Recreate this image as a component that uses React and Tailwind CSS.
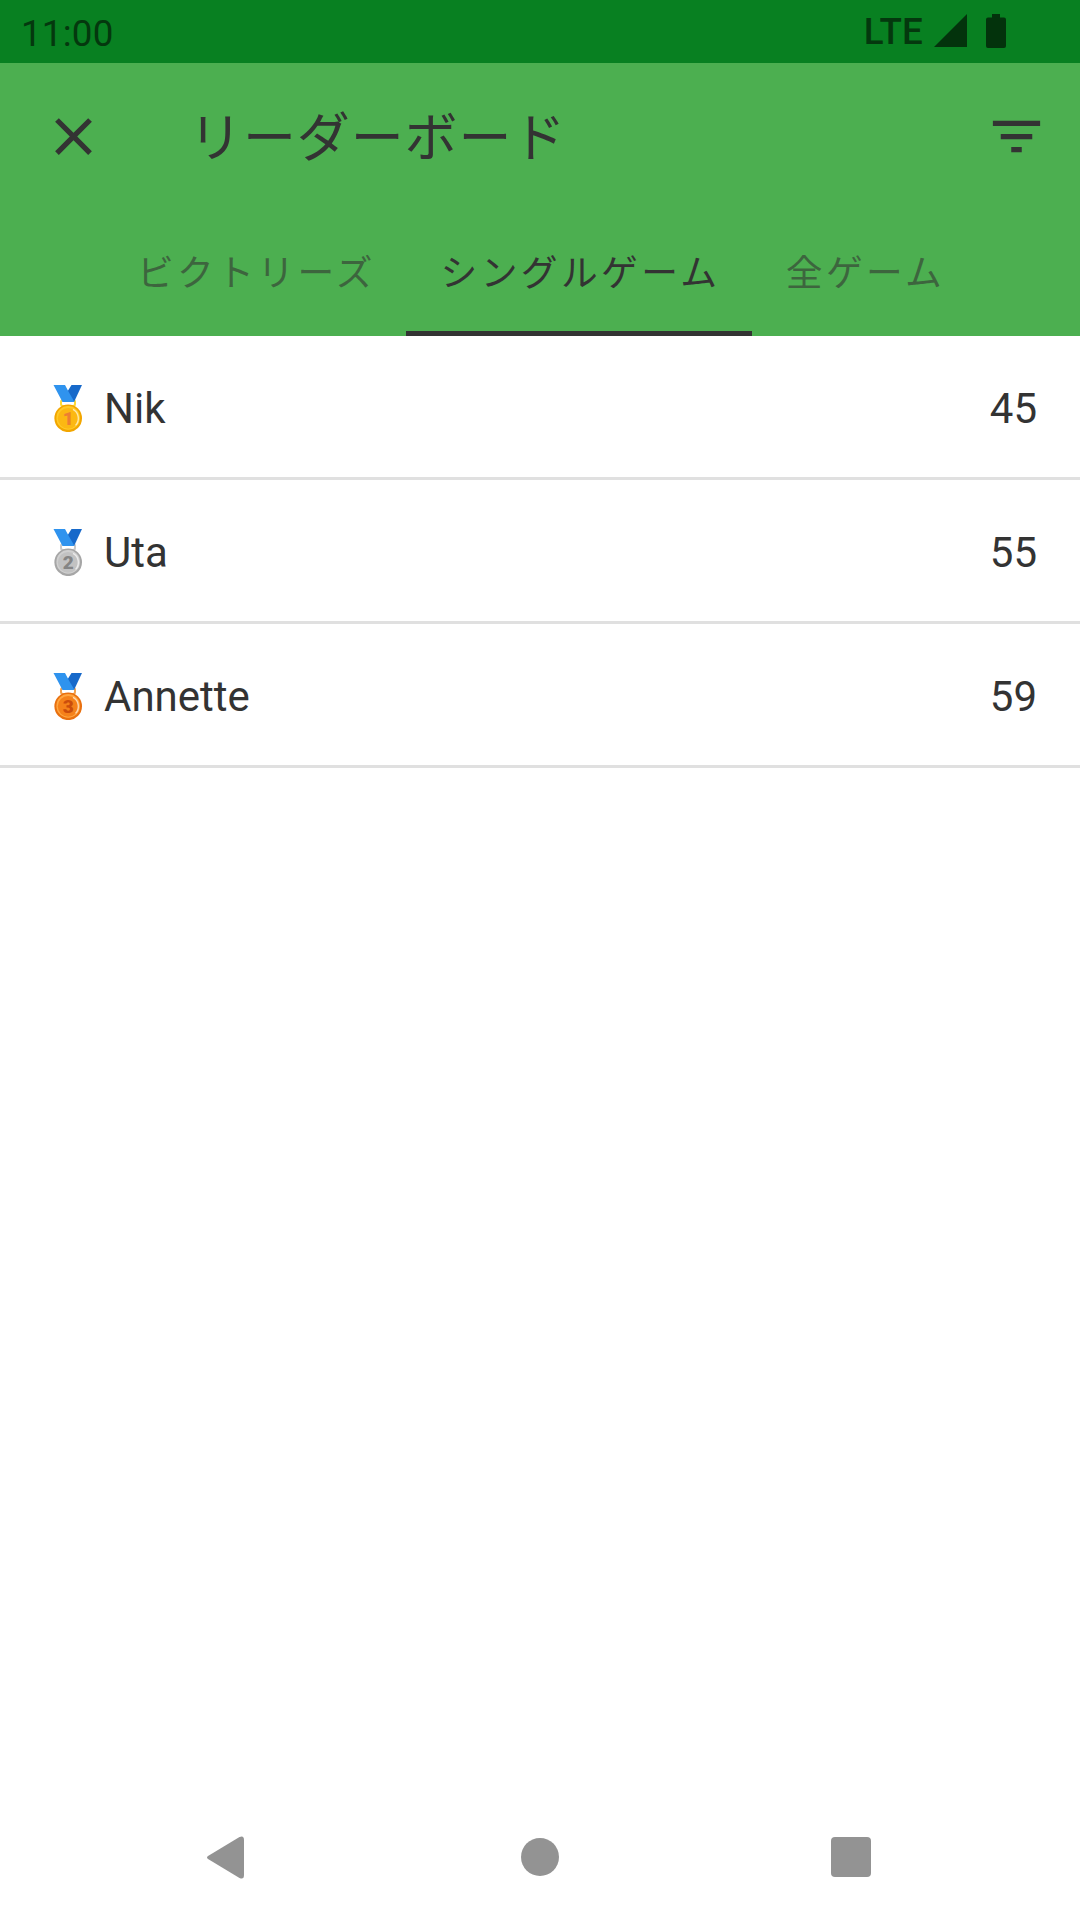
import React from 'react';
import { MdClose, MdFilterList } from 'react-icons/md';

const PLAYERS = [
    { rank: 1, name: 'Nik', score: 45 },
    { rank: 2, name: 'Uta', score: 55 },
    { rank: 3, name: 'Annette', score: 59 },
];

const TABS = [
    { label: 'ビクトリーズ', size: 'w-[306px] pl-[7px]' },
    { label: 'シングルゲーム', size: 'w-[346px] pl-[3px]', active: true },
    { label: '全ゲーム', size: 'w-[226px] pl-px' },
];

const MEDALS = {
    1: { rim: '#f2a600', face: '#ffca28', inner: '#fcb812', digit: '#ed8030', loop: '#fdd835' },
    2: { rim: '#a6a6a6', face: '#d0d0d0', inner: '#c2c2c2', digit: '#858585', loop: '#c9c9c9' },
    3: { rim: '#e9700f', face: '#ffa640', inner: '#f5811a', digit: '#cb4d0c', loop: '#f2a14d' },
};

const Medal = ({ rank }) => {
    const c = MEDALS[rank];
    return (
        <svg className="w-[52px] h-[52px] -mt-px" viewBox="0 0 52 52">
            <rect x="19" y="20" width="14" height="6" rx="2" fill="none" stroke={c.loop} strokeWidth="2" />
            <path d="M29.5 5h10.5L32 22h-5.5l-2-9z" fill="#1769ca" />
            <path d="M20.5 22L11.5 5H23l4 7.5 5.5 9.5z" fill="#2f93ee" />
            <circle cx="26.2" cy="38.3" r="13.8" fill={c.rim} />
            <circle cx="26.2" cy="37.9" r="11.8" fill={c.face} />
            <circle cx="26.2" cy="38.3" r="10.4" fill={c.inner} />
            <path d="M31 29.4a10.2 10.2 0 0 1 2.5 16" fill="none" stroke="#fff" strokeOpacity=".65" strokeWidth="1.3" />
            <text x="26.2" y="45" textAnchor="middle" fontSize="19" fontWeight="900" fontFamily="Roboto, sans-serif" fill={c.digit}>
                {rank}
            </text>
        </svg>
    );
};

const StatusBar = () => (
    <div className="h-[63px] bg-[#088021] text-[#04380e] flex items-center justify-between pl-[21px] pr-[74px] text-[36.75px] leading-none">
        <span className="pt-[5px] tracking-[0.2px]">11:00</span>
        <div className="flex items-center">
            <span className="font-medium tracking-[0.2px] mr-[11px] pt-0.5">LTE</span>
            <svg className="w-[33px] h-[63px] mr-[19px]" viewBox="0 0 33 63" fill="#03330c">
                <path d="M0 47L33 14v33z" />
            </svg>
            <svg className="w-5 h-[63px]" viewBox="0 0 20 63" fill="#03330c">
                <path d="M6 14h8v3.5h4a2 2 0 0 1 2 2V46a2 2 0 0 1-2 2H2a2 2 0 0 1-2-2V19.500a2 2 0 0 1 2-2h4z" />
            </svg>
        </div>
    </div>
);

const AppBar = () => (
    <header className="bg-[#4caf50] text-[#333333]">
        <div className="h-[147px] flex items-center pl-[42px] pr-8">
            <button>
                <MdClose className="w-[63px] h-[63px]" />
            </button>
            <h1 className="ml-[84px] pt-[5px] flex-1 text-[53px] leading-none tracking-[0.9px]">リーダーボード</h1>
            <button>
                <MdFilterList className="w-[63px] h-[63px]" />
            </button>
        </div>

        <nav className="h-[126px] flex justify-center pr-0.5">
            {TABS.map((tab) => (
                <button
                    key={tab.label}
                    className={`${tab.size} h-full flex items-center justify-center text-[36.75px] leading-none tracking-[3.4px] whitespace-nowrap border-b-[5px] pt-2 ${tab.active ? 'border-[#333333]' : 'border-transparent text-[#333333]/60'}`}
                >
                    {tab.label}
                </button>
            ))}
        </nav>
    </header>
);

const NavigationBar = () => (
    <footer className="h-[126px] flex items-center text-[#939393]">
        <svg className="w-[37px] h-[43px] ml-[207px]" viewBox="0 0 37 43" fill="currentColor">
            <path d="M1 20L32.500 1Q37 -1 37 4V39Q37 44 32.500 42L1 23Q-1 21.500 1 20z" />
        </svg>
        <div className="w-[38px] h-[38px] ml-[277px] rounded-full bg-current" />
        <div className="w-10 h-10 ml-[272px] rounded-[4px] bg-current" />
    </footer>
);

const App = () => (
    <div className="w-[1080px] h-[1920px] bg-white flex flex-col overflow-hidden font-[Roboto,'Noto_Sans_CJK_JP',sans-serif]">
        <StatusBar />
        <AppBar />

        {/* Ranking */}
        <main className="flex-1">
            {PLAYERS.map((player) => (
                <div
                    key={player.rank}
                    className="h-36 flex items-center px-[42px] border-b-[3px] border-[#e0e0e0] text-[42px] leading-none text-[#333333]"
                >
                    <Medal rank={player.rank} />
                    <span className="ml-[10px] flex-1 pt-[5px]">{player.name}</span>
                    <span className="pt-[5px] pr-px">{player.score}</span>
                </div>
            ))}
        </main>

        <NavigationBar />
    </div>
);

export default App;
